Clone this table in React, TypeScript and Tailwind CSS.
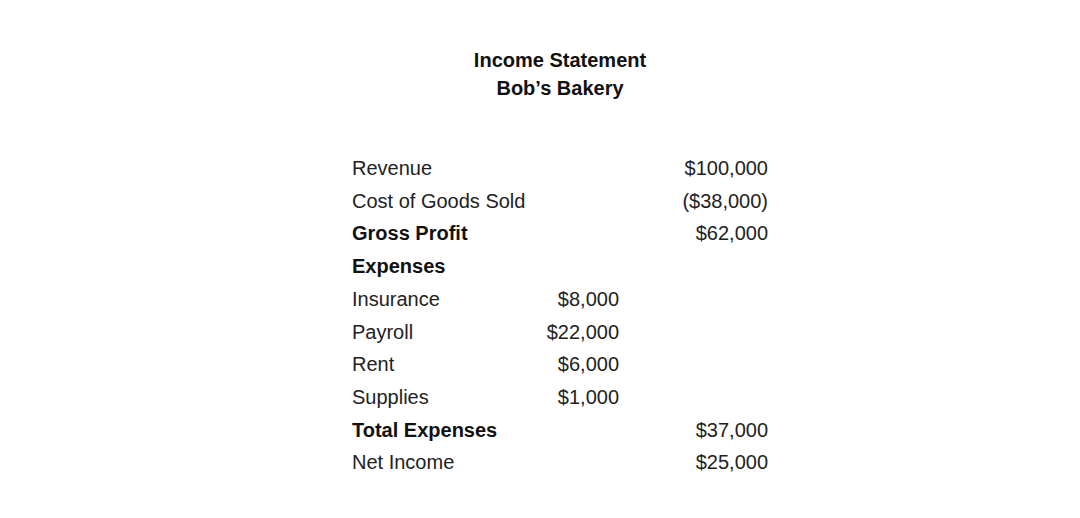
import React from "react";

type Row = {
  label: string;
  mid?: string;
  right?: string;
  bold?: boolean;
};

const rows: Row[] = [
  { label: "Revenue", right: "$100,000" },
  { label: "Cost of Goods Sold", right: "($38,000)" },
  { label: "Gross Profit", right: "$62,000", bold: true },
  { label: "Expenses", bold: true },
  { label: "Insurance", mid: "$8,000" },
  { label: "Payroll", mid: "$22,000" },
  { label: "Rent", mid: "$6,000" },
  { label: "Supplies", mid: "$1,000" },
  { label: "Total Expenses", right: "$37,000", bold: true },
  { label: "Net Income", right: "$25,000" },
];

const App = () => {
  return (
    <div
      className="w-full h-[518px] bg-white text-[#222222]"
      style={{ fontFamily: '"Liberation Sans", Arial, sans-serif' }}
    >
      <div className="w-[416px] ml-[352px] pt-[46px]">
        <div className="flex flex-col items-center text-[20px] font-bold leading-[28px] text-[#111111]">
          <p>Income Statement</p>
          <p>Bob’s Bakery</p>
        </div>

        <div className="mt-[50px] flex flex-col">
          {rows.map((row) => (
            <div
              key={row.label}
              className="grid grid-cols-[180px_87px_149px] text-[20px] leading-[32.7px]"
            >
              <span className={row.bold ? "font-bold text-[#111111]" : ""}>
                {row.label}
              </span>
              <span className="text-right">{row.mid}</span>
              <span className="text-right">{row.right}</span>
            </div>
          ))}
        </div>
      </div>
    </div>
  );
};

export default App;
